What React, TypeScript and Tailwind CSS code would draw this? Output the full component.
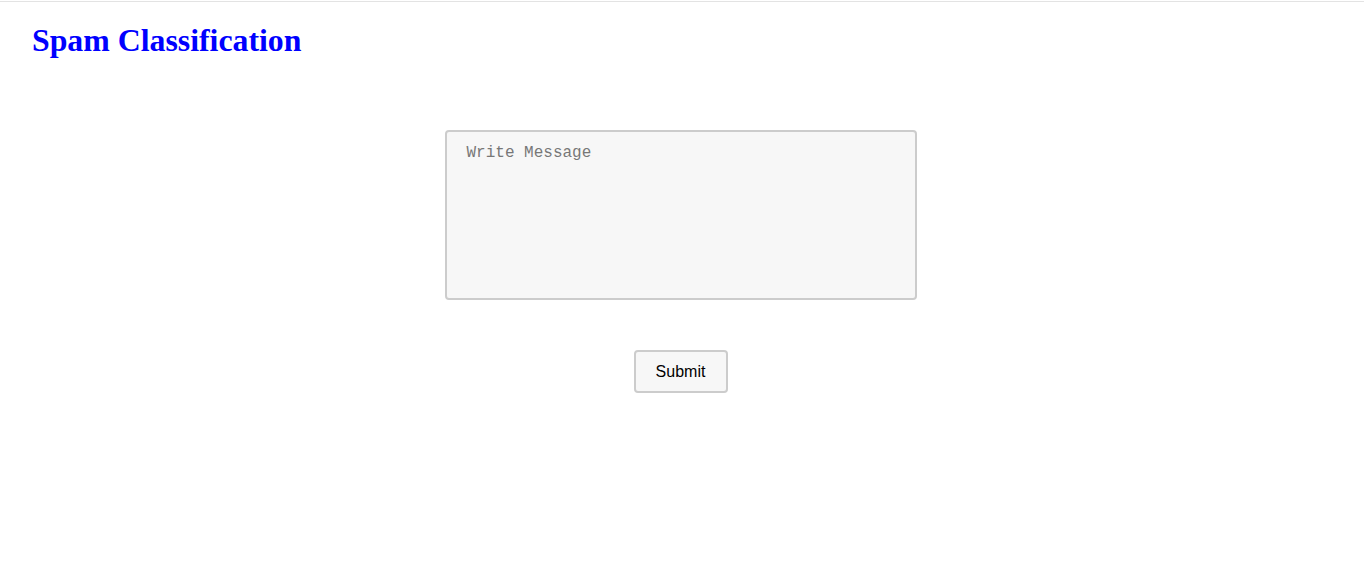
export default function App() {
  return (
    <div className="min-h-[580px] bg-white">
      <div className="mt-px h-px bg-[#e3e3e3]" />
      <h1 className="ml-8 mt-[21px] text-[31.8px] font-bold leading-[36px] text-[#0000ff] [font-family:'Liberation_Serif',serif]">
        Spam Classification
      </h1>
      <form className="mt-[71px] flex flex-col items-center pr-[3px]">
        <textarea
          placeholder="Write Message"
          className="h-[170px] w-[472px] resize-none rounded-[4px] border-2 border-[#cccccc] bg-[#f7f7f7] px-5 py-[11px] text-[16px] leading-[20px] text-black outline-none placeholder:text-[#777777] [font-family:'Liberation_Mono',monospace]"
        />
        <button
          type="button"
          className="mt-[50px] h-[43px] w-[94px] rounded-[4px] border-2 border-[#cccccc] bg-[#f7f7f7] pt-px text-[16px] text-black [font-family:'Liberation_Sans',sans-serif]"
        >
          Submit
        </button>
      </form>
    </div>
  );
}
